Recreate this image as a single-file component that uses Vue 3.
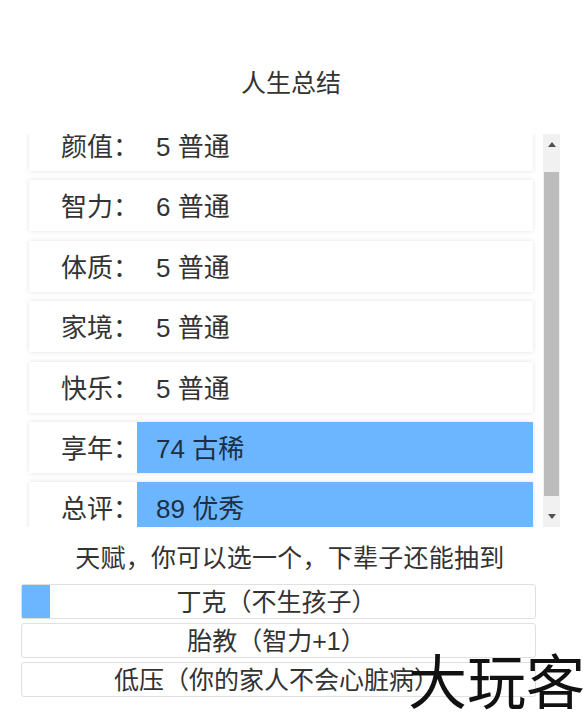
<template>
  <div class="page">
    <h1 class="title">人生总结</h1>

    <div class="summary">
      <div class="list">
        <div v-for="row in rows" :key="row.label" class="row">
          <div class="label">{{ row.label + colon }}</div>
          <div class="value" :class="{ high: row.high }">{{ row.value }}</div>
        </div>
      </div>
      <div class="scrollbar">
        <svg class="arrow" viewBox="0 0 10 6" width="8" height="5"><path d="M5 0 10 6H0z" /></svg>
        <div class="thumb"></div>
        <svg class="arrow" viewBox="0 0 10 6" width="8" height="5"><path d="M0 0H10L5 6z" /></svg>
      </div>
    </div>

    <p class="hint">{{ hint }}</p>

    <div class="talents">
      <button v-for="item in talents" :key="item.name" class="talent">
        <span class="fill" :style="{ width: item.progress + 'px' }"></span>
        <span class="name">{{ item.name }}</span>
      </button>
    </div>

    <div class="mark">大玩客</div>
  </div>
</template>

<script setup>
// full-width punctuation
const colon = '\uFF1A'
const comma = '\uFF0C'
const open = '\uFF08'
const close = '\uFF09'

const hint = `天赋${comma}你可以选一个${comma}下辈子还能抽到`

const rows = [
  { label: '颜值', value: '5 普通' },
  { label: '智力', value: '6 普通' },
  { label: '体质', value: '5 普通' },
  { label: '家境', value: '5 普通' },
  { label: '快乐', value: '5 普通' },
  { label: '享年', value: '74 古稀', high: true },
  { label: '总评', value: '89 优秀', high: true }
]

const talents = [
  { name: `丁克${open}不生孩子${close}`, progress: 28 },
  { name: `胎教${open}智力+1${close}`, progress: 0 },
  { name: `低压${open}你的家人不会心脏病${close}`, progress: 0 }
]
</script>

<style>
html,
body {
  background: #fff;
}
</style>

<style scoped>
.page {
  position: relative;
  width: 588px;
  height: 720px;
  overflow: hidden;
  background: #fff;
  color: #333;
  font-family: "Liberation Sans", "Noto Sans CJK SC", sans-serif;
}

.title {
  margin: 0;
  padding: 65px 6px 0 0;
  height: 134px;
  box-sizing: border-box;
  font-size: 25px;
  line-height: 36px;
  font-weight: 400;
  text-align: center;
}

.summary {
  display: flex;
  height: 393px;
}

.list {
  width: 504px;
  overflow: hidden;
  padding: 0 4px;
  margin-right: 6px;
  margin-left: 25px;
}

.row {
  display: flex;
  height: 51px;
  margin-bottom: 9.4px;
  background: #fff;
  box-shadow: 0 0 5px rgba(0, 0, 0, 0.12);
  font-size: 26px;
  line-height: 54px;
}

/* scrolled part way out of the list */
.row:first-child {
  height: 37px;
  line-height: 26px;
}

.label {
  flex: none;
  width: 108px;
  padding-left: 32px;
  box-sizing: border-box;
  white-space: nowrap;
}

.value {
  flex: 1;
  padding-left: 19px;
}

.value.high {
  background: #6cb6ff;
  color: #1c2f45;
}

.scrollbar {
  display: flex;
  flex-direction: column;
  align-items: center;
  width: 17px;
  background: #f1f1f1;
}

.arrow {
  flex: none;
  margin: 8px 0 25px;
  fill: #505050;
}

.arrow:last-child {
  margin: 18px 0 8px;
}

.thumb {
  flex: 1;
  width: 15px;
  background: #bcbcbc;
}

.hint {
  margin: 13px 0 0;
  padding-right: 8px;
  font-size: 25px;
  letter-spacing: 0.25px;
  line-height: 36px;
  text-align: center;
}

.talents {
  display: flex;
  flex-direction: column;
  gap: 4px;
  width: 515px;
  margin: 8px 0 0 21px;
}

.talent {
  position: relative;
  display: block;
  height: 35px;
  padding: 0 4px 0 0;
  border: 1px solid #e0e0e0;
  border-radius: 3px;
  background: #fff;
  color: #333;
  font-family: inherit;
  font-size: 25px;
  line-height: 35px;
  text-align: center;
}

.fill {
  position: absolute;
  top: 0;
  bottom: 0;
  left: 0;
  background: #6cb6ff;
}

.name {
  position: relative;
}

.mark {
  position: absolute;
  top: 642px;
  left: 408px;
  color: #111;
  font-size: 59px;
  line-height: 84px;
  white-space: nowrap;
}
</style>
